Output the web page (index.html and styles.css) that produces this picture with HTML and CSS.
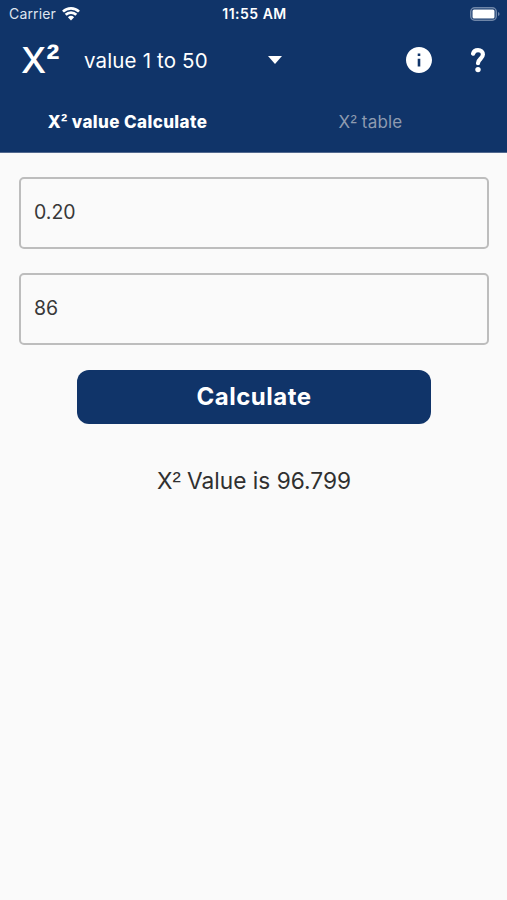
FILE: index.html
```html
<!DOCTYPE html>
<html lang="en">

<head>
    <meta charset="UTF-8">
    <title>X² Value Calculator</title>
    <link rel="stylesheet" href="styles.css">
</head>

<body>
    <header class="header">
        <div class="status-bar">
            <div class="carrier">
                <span class="carrier-name">Carrier</span>
                <svg class="wifi" width="18" height="14" viewBox="0 0 18 14">
                    <path d="M1 4.6 A11.5 11.5 0 0 1 17 4.6" />
                    <path d="M3.7 7.8 A7.5 7.5 0 0 1 14.3 7.8" />
                    <path class="dot" d="M9 13.4 L5.9 10.3 A4.5 4.5 0 0 1 12.1 10.3 Z" />
                </svg>
            </div>
            <span class="time">11:55 AM</span>
            <svg class="battery" width="30" height="14" viewBox="0 0 30 14">
                <rect class="battery-case" x="0.75" y="0.75" width="25.5" height="12.5" rx="4" />
                <rect class="battery-level" x="2.5" y="2.5" width="22" height="9" rx="1.5" />
                <path class="battery-cap" d="M28 5 Q29.6 5.5 29.6 7 T28 9 Z" />
            </svg>
        </div>

        <div class="toolbar">
            <h1 class="logo">X<span class="square">²</span></h1>
            <button class="dropdown">
                <span class="dropdown-label">value 1 to 50</span>
                <svg width="14" height="8" viewBox="0 0 14 8"><path d="M0 0h14L7 8z" /></svg>
            </button>
            <svg class="info" width="26" height="26" viewBox="2 2 20 20">
                <path d="M12 2C6.48 2 2 6.48 2 12s4.48 10 10 10 10-4.48 10-10S17.52 2 12 2zm1 15h-2v-6h2v6zm0-8h-2V7h2v2z" />
            </svg>
            <svg class="help" width="14" height="25" viewBox="0 0 14 25">
                <path d="M2.1 5.6C2.7 3.4 4.6 2.1 7 2.1c2.9 0 4.900 1.900 4.900 4.500 0 4-4.900 4.600-4.900 8.600" />
                <circle cx="7" cy="21.6" r="2.7" />
            </svg>
        </div>

        <nav class="tabs">
            <a class="tab active">X<span class="square">²</span> value Calculate</a>
            <a class="tab">X<span class="square">²</span> table</a>
        </nav>
    </header>

    <main class="container">
        <input class="field" type="text" value="0.20">
        <input class="field" type="text" value="86">
        <button class="calculate">Calculate</button>
        <p class="result">X<span class="square">²</span> Value is 96.799</p>
    </main>
</body>

</html>
```
FILE: styles.css
```css
* {
    box-sizing: border-box;
}

body {
    margin: 0;
    min-height: 900px;
    background-color: #fafafa;
    color: #303030;
    font-family: Inter, sans-serif;
}

button {
    border: none;
    padding: 0;
    font-family: inherit;
    color: #fff;
}

svg {
    display: block;
    fill: #fff;
}

.header {
    height: 153px;
    border-bottom: 1px solid #52698f;
    background-color: #103469;
    color: #fff;
}

/* narrower superscript two */
.square {
    font-family: "Liberation Sans", sans-serif;
    font-size: 1.1em;
    line-height: 1;
}

.status-bar {
    display: grid;
    grid-template-columns: 1fr auto 1fr;
    align-items: center;
    height: 27px;
    padding: 0 7px 0 9px;
    font-size: 14px;
}

.carrier {
    display: flex;
    align-items: center;
    gap: 6px;
}

.carrier-name {
    color: #dfe5ef;
    letter-spacing: 0.15px;
}

.time {
    font-size: 14px;
    font-weight: 600;
    letter-spacing: 0.5px;
}

.wifi path {
    fill: none;
    stroke: #fff;
    stroke-width: 2.7;
}

.wifi .dot {
    fill: #fff;
    stroke: none;
}

.battery {
    justify-self: end;
}

.battery-case {
    fill: none;
    stroke: #6f86a8;
    stroke-width: 1.5;
}

.battery-cap {
    fill: #6f86a8;
}

.toolbar {
    display: flex;
    align-items: center;
    height: 66px;
    padding: 0 22px 0 21px;
}

.logo {
    width: 63px;
    margin: 0;
    font-size: 36px;
    font-weight: 500;
}

.logo .square {
    font-weight: 700;
}

.dropdown {
    display: flex;
    align-items: center;
    justify-content: space-between;
    width: 198px;
    background: none;
    font-size: 20.5px;
    letter-spacing: 0.15px;
}

.info {
    margin-left: auto;
}

.help {
    margin-left: 39px;
}

.help path {
    fill: none;
    stroke: #fff;
    stroke-width: 4.2;
    stroke-linecap: round;
}

.tabs {
    display: grid;
    grid-template-columns: 1fr 1fr;
    height: 57px;
    padding: 0 15px 0 6px;
}

.tab {
    line-height: 58px;
    text-align: center;
    font-size: 17px;
    letter-spacing: 0.2px;
    color: #8e9bb0;
}

.tab.active {
    color: #fff;
    font-weight: 800;
    letter-spacing: 0.4px;
}

.container {
    display: flex;
    flex-direction: column;
    align-items: center;
    padding: 24px 18px 0 19px;
}

.field {
    width: 100%;
    height: 72px;
    margin-bottom: 24px;
    padding: 0 13px 2px;
    border: 2px solid #bdbdbd;
    border-radius: 5px;
    background: none;
    color: #383838;
    font-family: inherit;
    font-size: 19.5px;
}

.calculate {
    width: 354px;
    height: 54px;
    margin-top: 1px;
    padding-bottom: 1px;
    border-radius: 12px;
    background-color: #103469;
    font-size: 24px;
    font-weight: 700;
    letter-spacing: 0.5px;
}

.result {
    margin: 42px 0 0;
    font-size: 22.7px;
    line-height: 30px;
}
```
